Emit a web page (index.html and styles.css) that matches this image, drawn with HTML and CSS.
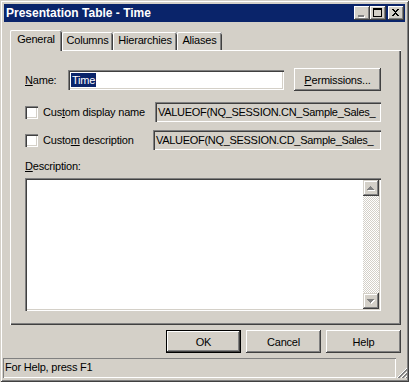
FILE: index.html
```html
<!DOCTYPE html>
<html>
<head>
<meta charset="utf-8">
<title>Presentation Table - Time</title>
<link rel="stylesheet" href="styles.css">
</head>
<body>
<div class="window">
  <div class="titlebar">
    <span class="title">Presentation Table - Time</span>
    <div class="caption-buttons">
      <span class="cap-btn">
        <svg width="16" height="14" viewBox="0 0 16 14" shape-rendering="crispEdges"><rect x="5" y="10" width="6" height="2" fill="#fff"/><rect x="4" y="9" width="6" height="2" fill="#808080"/></svg>
      </span>
      <span class="cap-btn">
        <svg width="16" height="14" viewBox="0 0 16 14" shape-rendering="crispEdges"><rect x="3" y="2" width="9" height="2" fill="#000"/><rect x="3" y="2" width="1" height="9" fill="#000"/><rect x="11" y="2" width="1" height="9" fill="#000"/><rect x="3" y="10" width="9" height="1" fill="#000"/></svg>
      </span>
      <span class="cap-btn cap-close">
        <svg width="16" height="14" viewBox="0 0 16 14" shape-rendering="crispEdges"><path d="M4 3h2v1h1v1h1V4h1V3h2v1h-1v1h-1v1h-1v1h1v1h1v1h1v1H9V9H8V8H7v1H6v1H4V9h1V8h1V7h1V6H6V5H5V4H4z" fill="#000"/></svg>
      </span>
    </div>
  </div>

  <div class="content">
    <div class="tabs">
      <div class="tab tab-active tab-general">General</div>
      <div class="tab tab-columns">Columns</div>
      <div class="tab tab-hier">Hierarchies</div>
      <div class="tab tab-aliases">Aliases</div>
    </div>

    <div class="panel">
      <div class="name-row">
        <span class="name-label"><u>N</u>ame:</span>
        <div class="text-input"><span class="selection">Time</span></div>
        <span class="btn btn-perm"><u>P</u>ermissions...</span>
      </div>

      <div class="check-row">
        <span class="checkbox"></span>
        <span class="check-label">Cus<u>t</u>om display name</span>
        <div class="readonly-field">VALUEOF(NQ_SESSION.CN_Sample_Sales_</div>
      </div>

      <div class="check-row check-row-2">
        <span class="checkbox"></span>
        <span class="check-label check-label-narrow">Custo<u>m</u> description</span>
        <div class="readonly-field">VALUEOF(NQ_SESSION.CD_Sample_Sales_</div>
      </div>

      <div class="desc-label"><u>D</u>escription:</div>
      <div class="textarea">
        <div class="textarea-body"></div>
        <div class="scrollbar">
          <span class="scroll-btn">
            <svg width="16" height="16" viewBox="0 0 16 16" shape-rendering="crispEdges"><path transform="translate(1 1)" d="M7 6h1v1h1v1h1v1h1v1H4V9h1V8h1V7h1z" fill="#fff"/><path d="M7 6h1v1h1v1h1v1h1v1H4V9h1V8h1V7h1z" fill="#808080"/></svg>
          </span>
          <span class="scroll-track"></span>
          <span class="scroll-btn">
            <svg width="16" height="16" viewBox="0 0 16 16" shape-rendering="crispEdges"><path transform="translate(1 1)" d="M4 6h7v1h-1v1h-1v1h-1v1H7V9H6V8H5V7H4z" fill="#fff"/><path d="M4 6h7v1h-1v1h-1v1h-1v1H7V9H6V8H5V7H4z" fill="#808080"/></svg>
          </span>
        </div>
      </div>
    </div>

    <div class="actions">
      <span class="btn btn-default">OK</span>
      <span class="btn">Cancel</span>
      <span class="btn">Help</span>
    </div>
  </div>

  <div class="statusbar">
    <div class="status-text">For Help, press F1</div>
    <svg class="grip" width="12" height="12" viewBox="0 0 12 12" shape-rendering="crispEdges">
      <path d="M11 1L1 11M11 5L5 11M11 9L9 11" stroke="#fff" fill="none"/>
      <path d="M11 2L2 11M11 3L3 11M11 6L6 11M11 7L7 11M11 10L10 11" stroke="#808080" fill="none"/>
    </svg>
  </div>
</div>
</body>
</html>
```

FILE: styles.css
```css
* {
  box-sizing: border-box;
}

body {
  margin: 0;
  background: #d4d0c8;
  font: 11px "Liberation Sans", Arial, sans-serif;
  letter-spacing: -0.2px;
  color: #000;
}

u {
  text-decoration: underline;
  text-underline-offset: 1px;
}

.window {
  width: 409px;
  height: 382px;
  padding: 3px;
  background: #d4d0c8;
  display: flex;
  flex-direction: column;
  box-shadow: inset 1px 1px #d4d0c8, inset -1px -1px #404040, inset 2px 2px #fff, inset -2px -2px #808080;
}

/* Title bar */
.titlebar {
  margin: 1px 1px 0;
  height: 18px;
  background: #0a246a;
  display: flex;
  align-items: center;
  padding: 0 1px 0 2px;
}

.title {
  color: #fff;
  font-weight: bold;
  font-size: 12px;
  letter-spacing: 0;
  flex: 1;
  white-space: nowrap;
}

.caption-buttons {
  display: flex;
  align-items: center;
}

.cap-btn {
  width: 16px;
  height: 14px;
  display: block;
  background: #d4d0c8;
  box-shadow: inset -1px -1px #404040, inset 1px 1px #fff, inset -2px -2px #808080;
}

.cap-btn svg {
  display: block;
}

.cap-close {
  margin-left: 2px;
}

/* Main content */
.content {
  margin: 0 5px 0 7px;
  display: flex;
  flex-direction: column;
}

.tabs {
  margin-top: 8px;
  height: 20px;
  display: flex;
  align-items: flex-end;
  position: relative;
  z-index: 2;
}

.tab {
  height: 18px;
  line-height: 17px;
  text-align: center;
  background: #d4d0c8;
  border-radius: 2px 2px 0 0;
  box-shadow: inset 1px 0 #fff, inset 0 1px #fff, inset -1px 0 #404040, inset -2px 0 #808080;
  white-space: nowrap;
}

.tab-active {
  height: 21px;
  margin-bottom: -1px;
  line-height: 19px;
  padding-bottom: 2px;
}

.tab-general { width: 52px; }
.tab-columns { width: 51px; }
.tab-hier { width: 64px; }
.tab-aliases { width: 45px; }

.panel {
  height: 275px;
  padding: 18px 20px 0 15px;
  background: #d4d0c8;
  box-shadow: inset 1px 1px #fff, inset -1px -1px #404040, inset -2px -2px #808080;
  display: flex;
  flex-direction: column;
}

/* Name row */
.name-row {
  display: flex;
  align-items: center;
  height: 23px;
}

.name-label {
  width: 43px;
  flex: none;
}

.text-input {
  flex: 1;
  height: 20px;
  background: #fff;
  padding: 0 3px;
  display: flex;
  align-items: center;
  box-shadow: inset 1px 1px #808080, inset 2px 2px #404040, inset -1px -1px #fff, inset -2px -2px #d4d0c8;
}

.selection {
  background: #0a246a;
  color: #fff;
  line-height: 14px;
  padding: 0 1px;
}

.btn {
  display: flex;
  align-items: center;
  justify-content: center;
  height: 23px;
  width: 75px;
  background: #d4d0c8;
  box-shadow: inset -1px -1px #404040, inset 1px 1px #fff, inset -2px -2px #808080;
  white-space: nowrap;
}

.btn-perm {
  width: 87px;
  margin-left: 10px;
  flex: none;
}

.btn-default {
  border: 1px solid #000;
}

/* Checkbox rows */
.check-row {
  display: flex;
  align-items: center;
  height: 20px;
  margin-top: 11px;
}

.check-row-2 {
  margin-top: 8px;
}

.checkbox {
  width: 13px;
  height: 13px;
  flex: none;
  margin-right: 5px;
  background: #fff;
  box-shadow: inset 1px 1px #808080, inset 2px 2px #404040, inset -1px -1px #fff, inset -2px -2px #d4d0c8;
}

.check-label {
  width: 112px;
  flex: none;
  white-space: nowrap;
}

.check-label-narrow {
  width: 110px;
}

.readonly-field {
  flex: 1;
  height: 20px;
  line-height: 20px;
  padding: 0 2px 0 3px;
  letter-spacing: -0.3px;
  white-space: nowrap;
  overflow: hidden;
  background: #d4d0c8;
  box-shadow: inset 1px 1px #808080, inset 2px 2px #404040, inset -1px -1px #fff, inset -2px -2px #d4d0c8;
}

/* Description */
.desc-label {
  margin-top: 10px;
  line-height: 13px;
}

.textarea {
  margin-top: 5px;
  height: 133px;
  padding: 2px;
  display: flex;
  background: #fff;
  box-shadow: inset 1px 1px #808080, inset 2px 2px #404040, inset -1px -1px #fff, inset -2px -2px #d4d0c8;
}

.textarea-body {
  flex: 1;
}

.scrollbar {
  width: 16px;
  display: flex;
  flex-direction: column;
}

.scroll-btn {
  width: 16px;
  height: 16px;
  display: block;
  background: #d4d0c8;
  box-shadow: inset -1px -1px #404040, inset 1px 1px #d4d0c8, inset -2px -2px #808080, inset 2px 2px #fff;
}

.scroll-btn svg {
  display: block;
}

.scroll-track {
  flex: 1;
  background-color: #fff;
  background-image: repeating-conic-gradient(#d4d0c8 0 25%, #fff 0 50%);
  background-size: 2px 2px;
}

/* Buttons */
.actions {
  margin-top: 5px;
  display: flex;
  justify-content: flex-end;
  gap: 5px;
}

/* Status bar */
.statusbar {
  margin-top: 5px;
  height: 20px;
  display: flex;
  align-items: flex-end;
}

.status-text {
  flex: 1;
  height: 20px;
  line-height: 19px;
  padding-left: 2px;
  box-shadow: inset 1px 1px #808080, inset -1px -1px #fff;
}

.grip {
  display: block;
  flex: none;
  margin-right: -2px;
  margin-bottom: -1px;
}
```
